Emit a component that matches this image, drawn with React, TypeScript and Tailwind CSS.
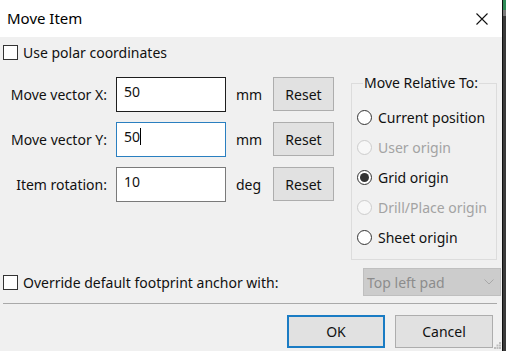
import React from "react";

const font = { fontFamily: '"Noto Sans", "Open Sans", sans-serif' };

function Checkbox() {
  return <div className="w-[15px] h-[15px] border border-[#333333] bg-white shrink-0" />;
}

function Radio({ checked, disabled, label }: { checked?: boolean; disabled?: boolean; label: string }) {
  return (
    <div className="flex items-center h-[30px]">
      <div
        className={
          "w-[15px] h-[15px] rounded-full border flex items-center justify-center shrink-0 " +
          (disabled ? "border-[#cccccc] bg-[#f7f7f7]" : "border-[#333333] bg-white")
        }
      >
        {checked && <div className="w-[9px] h-[9px] rounded-full bg-[#333333]" />}
      </div>
      <span className={"ml-[6px] whitespace-nowrap " + (disabled ? "text-[#a3a3a3]" : "text-[#111111]")}>{label}</span>
    </div>
  );
}

function Row({ label, value, unit, border, cursor }: { label: string; value: string; unit: string; border: string; cursor?: boolean }) {
  return (
    <div className="flex items-start h-[35px]">
      <div className="w-[104px] h-[35px] flex items-center justify-end whitespace-nowrap">{label}</div>
      <div className={"ml-[9px] w-[110px] h-[35px] bg-white border flex items-start pt-[3px] pl-[7px] " + border}>
        <span>{value}</span>
        {cursor && <span className="w-px h-[17px] bg-black mt-[2px]" />}
      </div>
      <div className="ml-[10px] w-[37px] h-[35px] flex items-center">{unit}</div>
      <div className="w-[61px] h-[34px] bg-[#e1e1e1] border border-[#adadad] flex items-center justify-center">Reset</div>
    </div>
  );
}

export default function App() {
  return (
    <div className="w-[506px] h-[351px] flex overflow-hidden text-[14px] text-[#111111]" style={font}>
      <div className="w-[502px] h-[351px] flex flex-col bg-[#f0f0f0]">
        <div className="h-[37px] bg-white flex items-center pl-[7px] pr-[14px] shrink-0">
          <span className="text-black text-[15px]">Move Item</span>
          <div className="flex-1" />
          <svg width="12" height="12" viewBox="0 0 12 12">
            <path d="M0.5 0.5 L11.5 11.5 M11.5 0.5 L0.5 11.5" stroke="#111" strokeWidth="1.1" fill="none" />
          </svg>
        </div>
        <div className="flex flex-col pl-[3px] flex-1">
          <div className="flex items-center h-[15px] mt-[8px]">
            <Checkbox />
            <span className="ml-[5px] whitespace-nowrap">Use polar coordinates</span>
          </div>
          <div className="flex items-start">
            <div className="flex flex-col gap-[10px] mt-[17px]">
              <Row label="Move vector X:" value="50" unit="mm" border="border-[#1e1e1e]" />
              <Row label="Move vector Y:" value="50" unit="mm" border="border-[#2a7fc0]" cursor />
              <Row label="Item rotation:" value="10" unit="deg" border="border-[#7a7a7a]" />
            </div>
            <fieldset className="ml-[17px] mt-[13px] w-[146px] h-[187px] border border-[#dcdcdc] pl-[5px] pr-0 pb-[6px] min-w-0">
              <legend className="ml-[6px] px-[1px] leading-[20px] whitespace-nowrap">Move Relative To:</legend>
              <div className="flex flex-col pt-[9px]">
                <Radio label="Current position" />
                <Radio label="User origin" disabled />
                <Radio label="Grid origin" checked />
                <Radio label="Drill/Place origin" disabled />
                <Radio label="Sheet origin" />
              </div>
            </fieldset>
          </div>
          <div className="flex items-center h-[28px] mt-[8px]">
            <Checkbox />
            <span className="ml-[5px] whitespace-nowrap">Override default footprint anchor with:</span>
            <div className="flex-1" />
            <div className="w-[138px] h-[28px] bg-[#cccccc] border border-[#bfbfbf] flex items-center pl-[3px] pr-[6px] text-[#8c8c8c] mr-[1px]">
              <span className="flex-1">Top left pad</span>
              <svg width="10" height="6" viewBox="0 0 10 6">
                <path d="M0.5 0.5 L5 5 L9.5 0.5" stroke="#a8a8a8" strokeWidth="1" fill="none" />
              </svg>
            </div>
          </div>
          <div className="mt-[7px] w-[494px] h-px bg-[#a9a9a9]" />
          <div className="flex items-start justify-end mt-[11px] pr-[9px] gap-[10px]">
            <div className="w-[98px] h-[33px] bg-[#e1e1e1] border-2 border-[#1a7cc4] flex items-center justify-center">OK</div>
            <div className="w-[98px] h-[33px] bg-[#e1e1e1] border border-[#adadad] flex items-center justify-center">Cancel</div>
          </div>
          <div className="flex justify-end pr-[1px] mt-[-6px]">
            <svg width="7" height="7" viewBox="0 0 7 7">
              <rect x="5" y="0" width="2" height="2" fill="#bdbdbd" />
              <rect x="2.5" y="2.5" width="2" height="2" fill="#bdbdbd" />
              <rect x="5" y="2.5" width="2" height="2" fill="#bdbdbd" />
              <rect x="0" y="5" width="2" height="2" fill="#bdbdbd" />
              <rect x="2.5" y="5" width="2" height="2" fill="#bdbdbd" />
              <rect x="5" y="5" width="2" height="2" fill="#bdbdbd" />
            </svg>
          </div>
        </div>
      </div>
      <div className="w-px h-[351px] bg-[#111111]" />
      <div className="w-[3px] h-[351px] flex flex-col bg-[#3a3a3a]">
        <div className="h-[10px] bg-[#2e8b57]" />
        <div className="h-[6px] bg-[#7a7a7a]" />
      </div>
    </div>
  );
}
